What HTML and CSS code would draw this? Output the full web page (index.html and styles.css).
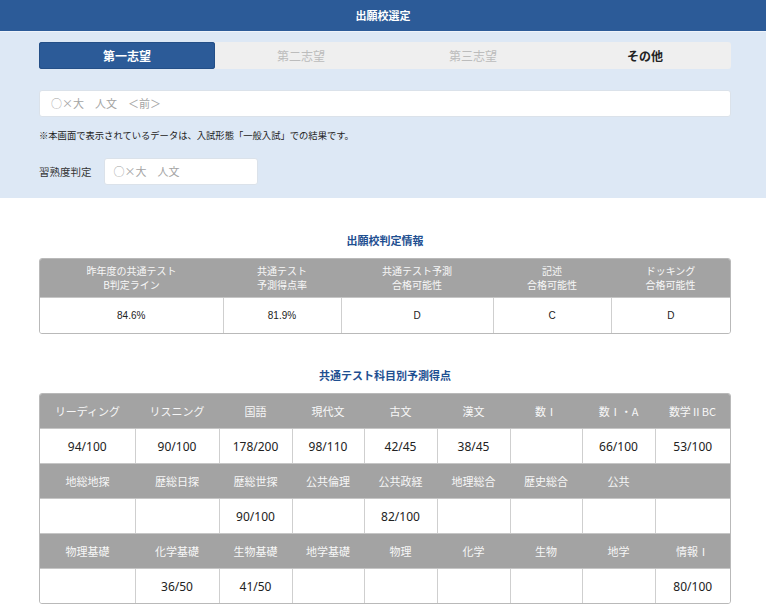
FILE: index.html
```html
<!DOCTYPE html>
<html lang="ja">
	<head>
		<meta charset="utf-8" />
		<title>出願校選定</title>
		<link rel="stylesheet" href="styles.css">
	</head>
	<body>
		<h1 class="page-title">出願校選定</h1>
		<section class="select">
			<div class="inner">
				<ul class="tabs">
					<li class="tab is-active">第一志望</li>
					<li class="tab is-disabled">第二志望</li>
					<li class="tab is-disabled">第三志望</li>
					<li class="tab">その他</li>
				</ul>
				<div class="field field-wide">○×大　人文　＜前＞</div>
				<p class="note">※本画面で表示されているデータは、入試形態「一般入試」での結果です。</p>
				<div class="level">
					<span class="level-label">習熟度判定</span>
					<div class="field field-small">○×大　人文</div>
				</div>
			</div>
		</section>

		<section class="inner result">
			<h2 class="section-title">出願校判定情報</h2>
			<div class="grid-wrap">
				<table class="grid judge">
					<colgroup>
						<col style="width:183px"><col style="width:118px"><col style="width:152px"><col style="width:118px"><col>
					</colgroup>
					<tr class="head">
						<th>昨年度の共通テスト<br>B判定ライン</th>
						<th>共通テスト<br>予測得点率</th>
						<th>共通テスト予測<br>合格可能性</th>
						<th>記述<br>合格可能性</th>
						<th>ドッキング<br>合格可能性</th>
					</tr>
					<tr class="body">
						<td>84.6%</td>
						<td>81.9%</td>
						<td>D</td>
						<td>C</td>
						<td>D</td>
					</tr>
				</table>
			</div>

			<h2 class="section-title second">共通テスト科目別予測得点</h2>
			<div class="grid-wrap">
				<table class="grid scores">
					<colgroup>
						<col style="width:95px"><col style="width:84px"><col style="width:73px"><col style="width:72px"><col style="width:73px"><col style="width:73px"><col style="width:72px"><col style="width:73px"><col>
					</colgroup>
					<tr class="head">
						<th>リーディング</th><th>リスニング</th><th>国語</th><th>現代文</th><th>古文</th><th>漢文</th><th>数Ⅰ</th><th>数Ⅰ・A</th><th>数学ⅡBC</th>
					</tr>
					<tr class="body">
						<td>94/100</td><td>90/100</td><td>178/200</td><td>98/110</td><td>42/45</td><td>38/45</td><td></td><td>66/100</td><td>53/100</td>
					</tr>
					<tr class="head">
						<th>地総地探</th><th>歴総日探</th><th>歴総世探</th><th>公共倫理</th><th>公共政経</th><th>地理総合</th><th>歴史総合</th><th>公共</th><th></th>
					</tr>
					<tr class="body">
						<td></td><td></td><td>90/100</td><td></td><td>82/100</td><td></td><td></td><td></td><td></td>
					</tr>
					<tr class="head">
						<th>物理基礎</th><th>化学基礎</th><th>生物基礎</th><th>地学基礎</th><th>物理</th><th>化学</th><th>生物</th><th>地学</th><th>情報Ⅰ</th>
					</tr>
					<tr class="body">
						<td></td><td>36/50</td><td>41/50</td><td></td><td></td><td></td><td></td><td></td><td>80/100</td>
					</tr>
				</table>
			</div>
		</section>
	</body>
</html>
```

FILE: styles.css
```css
html, body {
	margin: 0;
	padding: 0;
}
body {
	font-family: "Noto Sans CJK JP", "Noto Sans", sans-serif;
	background-color: #fff;
	color: #222;
}
.inner {
	width: 692px;
	margin-left: 39px;
}

/* header bar */
.page-title {
	margin: 0;
	height: 31px;
	line-height: 31px;
	font-size: 11px;
	font-weight: bold;
	color: #fff;
	text-align: center;
	background-color: #2c5b98;
	border-bottom: 1px solid #eef3fa;
}

/* choice selector */
.select {
	background-color: #dde8f5;
	padding: 10px 0 13px;
}
.tabs {
	display: flex;
	margin: 0;
	padding: 0;
	list-style: none;
	height: 27px;
	background-color: #efefef;
	border-radius: 3px;
}
.tab {
	flex: 1;
	line-height: 27px;
	text-align: center;
	font-size: 12px;
	font-weight: bold;
	color: #222;
}
.tab.is-active {
	background-color: #2c5b98;
	color: #fff;
	border-radius: 3px;
	box-shadow: inset 0 0 0 1px #244f87;
	flex: 0 0 176px;
}
.tab.is-disabled {
	color: #bcbcbc;
	font-weight: normal;
}
.field {
	box-sizing: border-box;
	height: 27px;
	line-height: 25px;
	background-color: #fff;
	border: 1px solid #dbe2ea;
	border-radius: 3px;
	font-size: 11px;
	color: #a4a4a4;
}
.field-wide {
	margin-top: 21px;
	padding-left: 11px;
}
.note {
	margin: 11px 0 0;
	line-height: 14px;
	font-size: 9.3px;
	color: #222;
}
.level {
	display: flex;
	align-items: center;
	margin-top: 16px;
}
.level-label {
	font-size: 10.5px;
	color: #333;
	margin-right: 12px;
}
.field-small {
	width: 154px;
	padding-left: 9px;
}

/* result tables */
.section-title {
	margin: 34px 0 10px;
	line-height: 16px;
	font-size: 11px;
	font-weight: bold;
	color: #1e4f91;
	text-align: center;
}
.section-title.second {
	margin-top: 33px;
}
.grid-wrap {
	border: 1px solid #b9b9b9;
	border-radius: 3px;
	overflow: hidden;
}
.grid {
	width: 100%;
	border-collapse: collapse;
	table-layout: fixed;
	text-align: center;
}
.grid th,
.grid td {
	padding: 0;
	border-left: 1px solid #cfcfcf;
}
.grid th:first-child,
.grid td:first-child {
	border-left: none;
}
.grid .head th {
	background-color: #a3a3a3;
	color: #f7f7f7;
	font-weight: normal;
	border-left: none;
}
.grid .body td {
	background-color: #fff;
	border-top: 1px solid #c6c6c6;
	border-bottom: 1px solid #c6c6c6;
}
.grid tr:last-child td {
	border-bottom: none;
}

.judge th {
	height: 38px;
	font-size: 10px;
	line-height: 14.5px;
}
.judge td {
	height: 35px;
	font-family: "Liberation Sans", sans-serif;
	font-size: 10px;
}

.scores th {
	height: 34px;
	font-size: 11px;
}
.scores td {
	height: 34px;
	font-family: "Noto Sans", "Noto Sans CJK JP", sans-serif;
	font-size: 12px;
	color: #222;
}
```
